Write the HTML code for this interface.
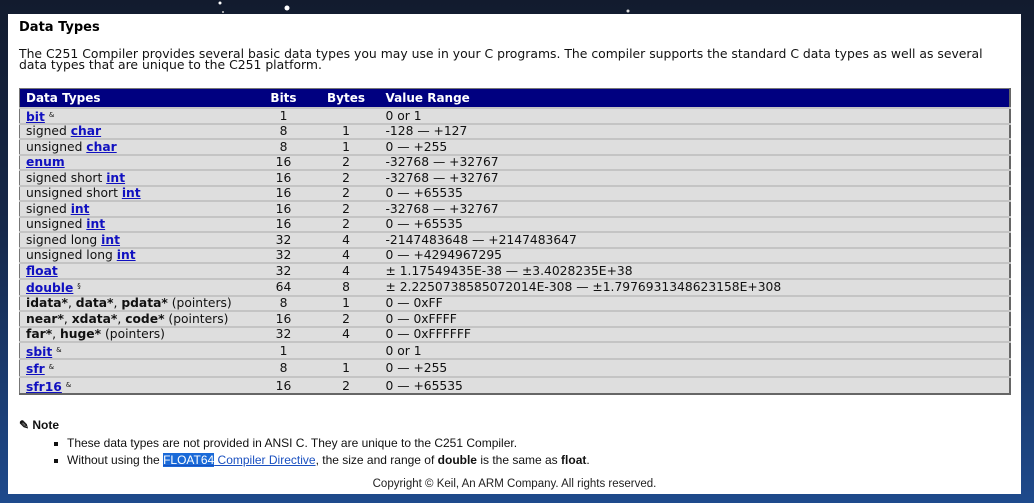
<!DOCTYPE html>
<html><head><meta charset="utf-8"><style>
*{margin:0;padding:0;box-sizing:border-box}
body{width:1034px;height:503px;overflow:hidden;background:linear-gradient(180deg,#121b2e 0%,#16284a 45%,#1e4a8c 100%);font-family:"DejaVu Sans","Liberation Sans",sans-serif;position:relative}
.panel{position:absolute;left:8px;top:14px;width:1013px;height:480px;background:#fff}
h1{position:absolute;left:11px;top:6px;font-size:13px;font-weight:bold;color:#000}
.intro{position:absolute;left:11px;top:34px;font-size:12.4px;line-height:11px;color:#111;width:995px;white-space:nowrap}
table{position:absolute;left:11px;top:74px;width:992px;border-collapse:collapse;font-size:12.3px;color:#111;border:1px solid #777;border-right:2px solid #666;border-bottom:2px solid #666}
th{background:#000080;color:#fff;text-align:left;height:19px;padding:0 0 0 6px;font-size:12px}
td{background:#dedede;border-top:2px solid #c4c4c4;padding:0 0 0 6px;height:15.5px;line-height:12px;white-space:nowrap}
td.c{text-align:center;padding:0}
td.v{padding-left:9px}
a{color:#1010c0;font-weight:bold;text-decoration:underline}
sup{font-size:7px;vertical-align:4px}
.note{position:absolute;left:11px;top:404px;font-family:"Liberation Sans Narrow","Liberation Sans",sans-serif;font-size:12px;color:#111}
.note ul{list-style:none;margin-left:48px;margin-top:3px}
.note li{line-height:17px;position:relative}
.note li:before{content:"";position:absolute;left:-13px;top:7px;width:4px;height:4px;background:#111}
.note a{font-weight:normal;color:#1a50c0}
.note .hl{background:#1a6ad8;color:#fff}
.copy{position:absolute;left:0;width:1013px;top:464px;text-align:center;font-family:"Liberation Sans Narrow","Liberation Sans",sans-serif;font-size:11.5px;color:#222}
.dots{position:absolute;top:0;left:0}
</style></head><body>
<svg class="dots" width="1034" height="14"><circle cx="287" cy="8" r="2.5" fill="#fff"/><circle cx="220" cy="3" r="1.5" fill="#fff"/><circle cx="223" cy="12" r="1" fill="#ccc"/><circle cx="628" cy="11" r="1.5" fill="#ddd"/></svg>
<div class="panel">
<h1>Data Types</h1>
<div class="intro">The C251 Compiler provides several basic data types you may use in your C programs. The compiler supports the standard C data types as well as several<br>data types that are unique to the C251 platform.</div>
<table>
<colgroup><col style="width:232px"><col style="width:64px"><col style="width:61px"><col></colgroup>
<tr><th>Data Types</th><th style="text-align:center;padding:0">Bits</th><th style="text-align:center;padding:0">Bytes</th><th style="padding-left:9px">Value Range</th></tr>
<tr><td><a>bit</a> <sup>&amp;</sup></td><td class="c">1</td><td class="c"></td><td class="v">0 or 1</td></tr>
<tr><td>signed <a>char</a></td><td class="c">8</td><td class="c">1</td><td class="v">-128 — +127</td></tr>
<tr><td>unsigned <a>char</a></td><td class="c">8</td><td class="c">1</td><td class="v">0 — +255</td></tr>
<tr><td><a>enum</a></td><td class="c">16</td><td class="c">2</td><td class="v">-32768 — +32767</td></tr>
<tr><td>signed short <a>int</a></td><td class="c">16</td><td class="c">2</td><td class="v">-32768 — +32767</td></tr>
<tr><td>unsigned short <a>int</a></td><td class="c">16</td><td class="c">2</td><td class="v">0 — +65535</td></tr>
<tr><td>signed <a>int</a></td><td class="c">16</td><td class="c">2</td><td class="v">-32768 — +32767</td></tr>
<tr><td>unsigned <a>int</a></td><td class="c">16</td><td class="c">2</td><td class="v">0 — +65535</td></tr>
<tr><td>signed long <a>int</a></td><td class="c">32</td><td class="c">4</td><td class="v">-2147483648 — +2147483647</td></tr>
<tr><td>unsigned long <a>int</a></td><td class="c">32</td><td class="c">4</td><td class="v">0 — +4294967295</td></tr>
<tr><td><a>float</a></td><td class="c">32</td><td class="c">4</td><td class="v">± 1.17549435E-38 — ±3.4028235E+38</td></tr>
<tr><td style="height:17px"><a>double</a> <sup>§</sup></td><td class="c">64</td><td class="c">8</td><td class="v">± 2.2250738585072014E-308 — ±1.7976931348623158E+308</td></tr>
<tr><td><b>idata*</b>, <b>data*</b>, <b>pdata*</b> (pointers)</td><td class="c">8</td><td class="c">1</td><td class="v">0 — 0xFF</td></tr>
<tr><td><b>near*</b>, <b>xdata*</b>, <b>code*</b> (pointers)</td><td class="c">16</td><td class="c">2</td><td class="v">0 — 0xFFFF</td></tr>
<tr><td><b>far*</b>, <b>huge*</b> (pointers)</td><td class="c">32</td><td class="c">4</td><td class="v">0 — 0xFFFFFF</td></tr>
<tr><td style="height:17px"><a>sbit</a> <sup>&amp;</sup></td><td class="c">1</td><td class="c"></td><td class="v">0 or 1</td></tr>
<tr><td style="height:18px"><a>sfr</a> <sup>&amp;</sup></td><td class="c">8</td><td class="c">1</td><td class="v">0 — +255</td></tr>
<tr><td style="height:17px"><a>sfr16</a> <sup>&amp;</sup></td><td class="c">16</td><td class="c">2</td><td class="v">0 — +65535</td></tr>
</table>
<div class="note"><b>&#9998; Note</b>
<ul><li>These data types are not provided in ANSI C. They are unique to the C251 Compiler.</li>
<li>Without using the <a><span class="hl">FLOAT64</span> Compiler Directive</a>, the size and range of <b>double</b> is the same as <b>float</b>.</li></ul></div>
<div class="copy">Copyright © Keil, An ARM Company. All rights reserved.</div>
</div>
</body></html>
